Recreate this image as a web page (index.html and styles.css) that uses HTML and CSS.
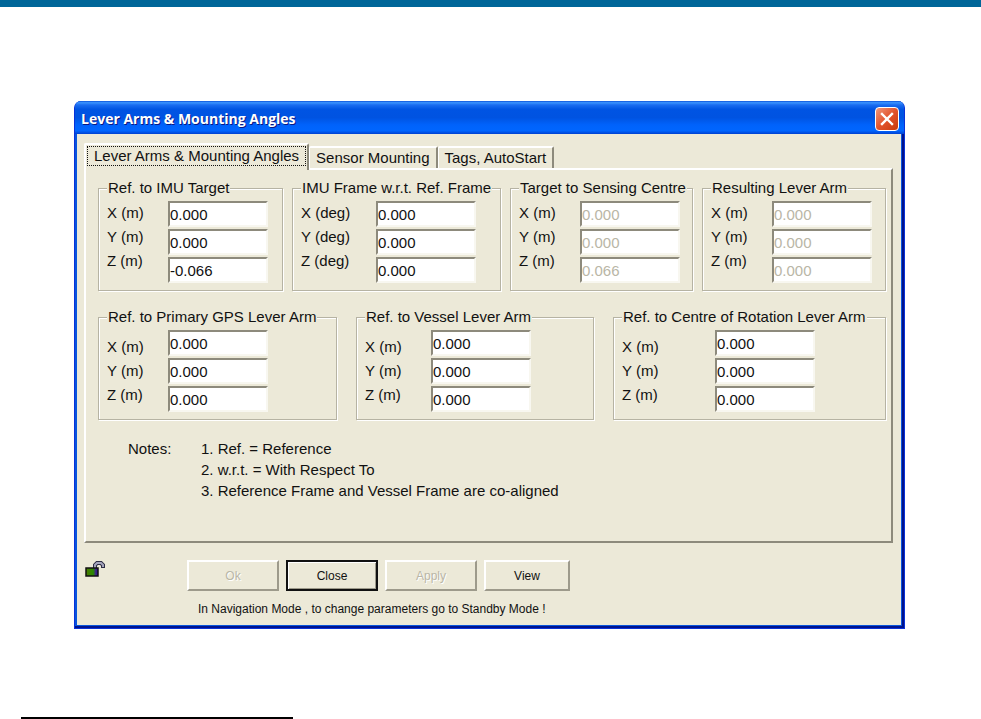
FILE: index.html
```
<!DOCTYPE html>
<html lang="en">
<head>
    <meta charset="UTF-8">
    <meta name="viewport" content="width=device-width, initial-scale=1.0">
    <title>Lever Arms &amp; Mounting Angles</title>
    <link rel="stylesheet" href="styles.css">
</head>
<body>
    <header class="page-bar"></header>

    <main class="window">
        <div class="titlebar">
            <h1>Lever Arms &amp; Mounting Angles</h1>
            <button type="button" class="close-box" aria-label="Close window">
                <svg width="14" height="14" viewBox="0 0 14 14"><path d="M2 2L12 12M12 2L2 12" stroke="#fff" stroke-width="2.4" stroke-linecap="square"/></svg>
            </button>
        </div>

        <form class="dialog">
            <div class="tabs" role="tablist">
                <button type="button" class="tab active" role="tab" aria-selected="true"><span>Lever Arms &amp; Mounting Angles</span></button>
                <button type="button" class="tab" role="tab">Sensor Mounting</button>
                <button type="button" class="tab" role="tab">Tags, AutoStart</button>
            </div>

            <div class="panel" role="tabpanel">
                <div class="groups top">
                    <fieldset>
                        <legend>Ref. to IMU Target</legend>
                        <div class="group">
                            <div class="names">
                                <label for="imuX">X (m)</label>
                                <label for="imuY">Y (m)</label>
                                <label for="imuZ">Z (m)</label>
                            </div>
                            <div class="fields">
                                <input type="text" id="imuX" value="0.000">
                                <input type="text" id="imuY" value="0.000">
                                <input type="text" id="imuZ" value="-0.066">
                            </div>
                        </div>
                    </fieldset>
                    <fieldset>
                        <legend>IMU Frame w.r.t. Ref. Frame</legend>
                        <div class="group">
                            <div class="names degrees">
                                <label for="frameX">X (deg)</label>
                                <label for="frameY">Y (deg)</label>
                                <label for="frameZ">Z (deg)</label>
                            </div>
                            <div class="fields">
                                <input type="text" id="frameX" value="0.000">
                                <input type="text" id="frameY" value="0.000">
                                <input type="text" id="frameZ" value="0.000">
                            </div>
                        </div>
                    </fieldset>
                    <fieldset>
                        <legend>Target to Sensing Centre</legend>
                        <div class="group">
                            <div class="names">
                                <label for="sensX">X (m)</label>
                                <label for="sensY">Y (m)</label>
                                <label for="sensZ">Z (m)</label>
                            </div>
                            <div class="fields">
                                <input type="text" id="sensX" value="0.000" disabled>
                                <input type="text" id="sensY" value="0.000" disabled>
                                <input type="text" id="sensZ" value="0.066" disabled>
                            </div>
                        </div>
                    </fieldset>
                    <fieldset>
                        <legend>Resulting Lever Arm</legend>
                        <div class="group">
                            <div class="names">
                                <label for="resX">X (m)</label>
                                <label for="resY">Y (m)</label>
                                <label for="resZ">Z (m)</label>
                            </div>
                            <div class="fields">
                                <input type="text" id="resX" value="0.000" disabled>
                                <input type="text" id="resY" value="0.000" disabled>
                                <input type="text" id="resZ" value="0.000" disabled>
                            </div>
                        </div>
                    </fieldset>
                </div>

                <div class="groups bottom">
                    <fieldset>
                        <legend>Ref. to Primary GPS Lever Arm</legend>
                        <div class="group">
                            <div class="names">
                                <label for="gpsX">X (m)</label>
                                <label for="gpsY">Y (m)</label>
                                <label for="gpsZ">Z (m)</label>
                            </div>
                            <div class="fields">
                                <input type="text" id="gpsX" value="0.000">
                                <input type="text" id="gpsY" value="0.000">
                                <input type="text" id="gpsZ" value="0.000">
                            </div>
                        </div>
                    </fieldset>
                    <fieldset>
                        <legend>Ref. to Vessel Lever Arm</legend>
                        <div class="group">
                            <div class="names vessel">
                                <label for="vesX">X (m)</label>
                                <label for="vesY">Y (m)</label>
                                <label for="vesZ">Z (m)</label>
                            </div>
                            <div class="fields">
                                <input type="text" id="vesX" value="0.000">
                                <input type="text" id="vesY" value="0.000">
                                <input type="text" id="vesZ" value="0.000">
                            </div>
                        </div>
                    </fieldset>
                    <fieldset>
                        <legend>Ref. to Centre of Rotation Lever Arm</legend>
                        <div class="group">
                            <div class="names rotation">
                                <label for="rotX">X (m)</label>
                                <label for="rotY">Y (m)</label>
                                <label for="rotZ">Z (m)</label>
                            </div>
                            <div class="fields">
                                <input type="text" id="rotX" value="0.000">
                                <input type="text" id="rotY" value="0.000">
                                <input type="text" id="rotZ" value="0.000">
                            </div>
                        </div>
                    </fieldset>
                </div>

                <div class="notes">
                    <div class="notes-title">Notes:</div>
                    <div>
                        <p>1. Ref. = Reference</p>
                        <p>2. w.r.t. = With Respect To</p>
                        <p>3. Reference Frame and Vessel Frame are co-aligned</p>
                    </div>
                </div>
            </div>

            <div class="actions">
                <!-- open padlock -->
                <svg class="lock" width="20" height="17" viewBox="0 0 20 17">
                    <defs>
                        <linearGradient id="lockBody">
                            <stop offset="0" stop-color="#4a7a00"/>
                            <stop offset="0.6" stop-color="#2a8a00"/>
                            <stop offset="0.8" stop-color="#3a2a80"/>
                            <stop offset="1" stop-color="#3000a0"/>
                        </linearGradient>
                    </defs>
                    <path d="M10 8V4L12 2H16L18 4V7" fill="none" stroke="#2c2c44" stroke-width="4"/>
                    <path d="M10 7V4L12 2H16L18 4V6" fill="none" stroke="#a4a4bc" stroke-width="2"/>
                    <rect x="1" y="7" width="12" height="8" fill="url(#lockBody)" stroke="#101010" stroke-width="1.5"/>
                </svg>
                <button type="button" disabled>Ok</button>
                <button type="button" class="default">Close</button>
                <button type="button" disabled>Apply</button>
                <button type="button" class="view">View</button>
            </div>
            <p class="status">In Navigation Mode , to change parameters go to Standby Mode !</p>
        </form>
    </main>

    <hr class="footnote">
</body>
</html>
```
FILE: styles.css
```
* {
    box-sizing: border-box;
}
body {
    margin: 0;
    background-color: #fff;
    color: #111;
    font-family: "Liberation Sans", Arial, sans-serif;
    font-size: 15px;
}
p, h1 {
    margin: 0;
}
button, input {
    font-family: inherit;
    color: inherit;
    margin: 0;
    padding: 0;
    border-radius: 0;
}
.page-bar {
    height: 7px;
    background-color: #006699;
}
.window {
    margin: 94px 76px 0 74px;
    border: 1px solid #0831d9;
    border-width: 0 1px 1px;
    border-radius: 7px 7px 0 0;
    background-color: #0855dd;
    padding: 0 3px 3px 2px;
    box-shadow: inset -2px -2px 0 #00138c;
}
.titlebar {
    display: flex;
    align-items: center;
    justify-content: space-between;
    height: 33px;
    margin: 0 -3px 0 -2px;
    padding: 3px 5px 0 6px;
    border-radius: 6px 6px 0 0;
    background: linear-gradient(#0a50d8 0%, #3a93ff 5%, #1a6cf0 12%, #0054e3 25%, #0053e1 50%, #0062fb 72%, #0066ff 90%, #0040d0 100%);
}
.titlebar h1 {
    font-family: "Open Sans", "Noto Sans", sans-serif;
    font-size: 14px;
    line-height: 20px;
    font-weight: bold;
    color: #fff;
    text-shadow: 1px 1px 0 #0a1883;
}
.close-box {
    display: flex;
    align-items: center;
    justify-content: center;
    width: 24px;
    height: 24px;
    border: 1px solid #fff;
    border-radius: 4px;
    background: linear-gradient(135deg, #f0987c, #e2532c 50%, #c83a0c);
}
.dialog {
    background-color: #ece9d8;
    padding: 9px 8px 8px 7px;
}
.tabs {
    display: flex;
    align-items: flex-end;
}
.tab {
    height: 22px;
    padding: 0 6px;
    border: 2px solid #fff;
    border-color: #fff #8d8a7c transparent #fff;
    border-bottom: 0;
    border-radius: 2px 2px 0 0;
    background-color: #ece9d8;
    font-size: 15px;
    line-height: 20px;
}
.tab + .tab {
    border-left-width: 1px;
}
.tab.active {
    position: relative;
    height: 27px;
    margin-bottom: -2px;
    padding: 1px 1px 4px;
}
.tab.active span {
    display: block;
    padding: 0 6px;
    border: 1px dotted #111;
    line-height: 18px;
}
.panel {
    padding: 10px 5px 40px 12px;
    border: 2px solid #fff;
    border-color: #fff #8d8a7c #8d8a7c #fff;
}
.groups {
    display: grid;
    gap: 9px;
}
.groups.top {
    grid-template-columns: 185fr 209fr 183fr 184fr;
}
.groups.bottom {
    grid-template-columns: 239fr 238fr 273fr;
    gap: 19px;
    margin-top: 18px;
}
fieldset {
    min-width: 0;
    margin: 0;
    padding: 5px 0 7px 8px;
    border: 1px solid #b6b3a3;
    box-shadow: 1px 1px 0 #fff, inset 1px 1px 0 #fff;
}
legend {
    padding: 0 1px;
    background-color: #ece9d8;
    line-height: 16px;
    white-space: nowrap;
}
.group {
    display: flex;
}
.names {
    display: flex;
    flex-direction: column;
    width: 61px;
    line-height: 24px;
}
.names.degrees {
    width: 75px;
}
.names.vessel {
    width: 66px;
}
.names.rotation {
    width: 93px;
}
.bottom .names {
    padding-top: 5px;
}
.fields {
    display: flex;
    flex-direction: column;
    gap: 2px;
}
.fields input {
    width: 100px;
    height: 26px;
    border: 2px solid #8d8a7c;
    border-color: #8d8a7c #f8f7f0 #f8f7f0 #8d8a7c;
    background-color: #fff;
    font-size: 15px;
}
.fields input:disabled {
    color: #b9b6a6;
}
.notes {
    display: flex;
    margin: 18px 0 0 30px;
    line-height: 21px;
}
.notes-title {
    width: 73px;
}
.actions {
    display: flex;
    gap: 7px;
    padding-top: 17px;
}
.lock {
    margin: 1px 75px 0 1px;
}
.actions button {
    width: 92px;
    height: 31px;
    border: 2px solid #fff;
    border-color: #fff #9d9a8b #9d9a8b #fff;
    background-color: #ece9d8;
    font-size: 12px;
}
.actions button:disabled {
    color: #b9b6a6;
    text-shadow: 1px 1px 0 #fff;
}
.actions .default {
    border-color: #111;
    box-shadow: inset 1px 1px 0 #fff, inset -1px -1px 0 #9d9a8b;
}
.actions .view {
    width: 86px;
}
.status {
    margin: 10px 0 0 114px;
    font-size: 12px;
    line-height: 16px;
}
.footnote {
    width: 272px;
    height: 2px;
    margin: 88px 0 0 21px;
    border: 0;
    background-color: #000;
}
```
